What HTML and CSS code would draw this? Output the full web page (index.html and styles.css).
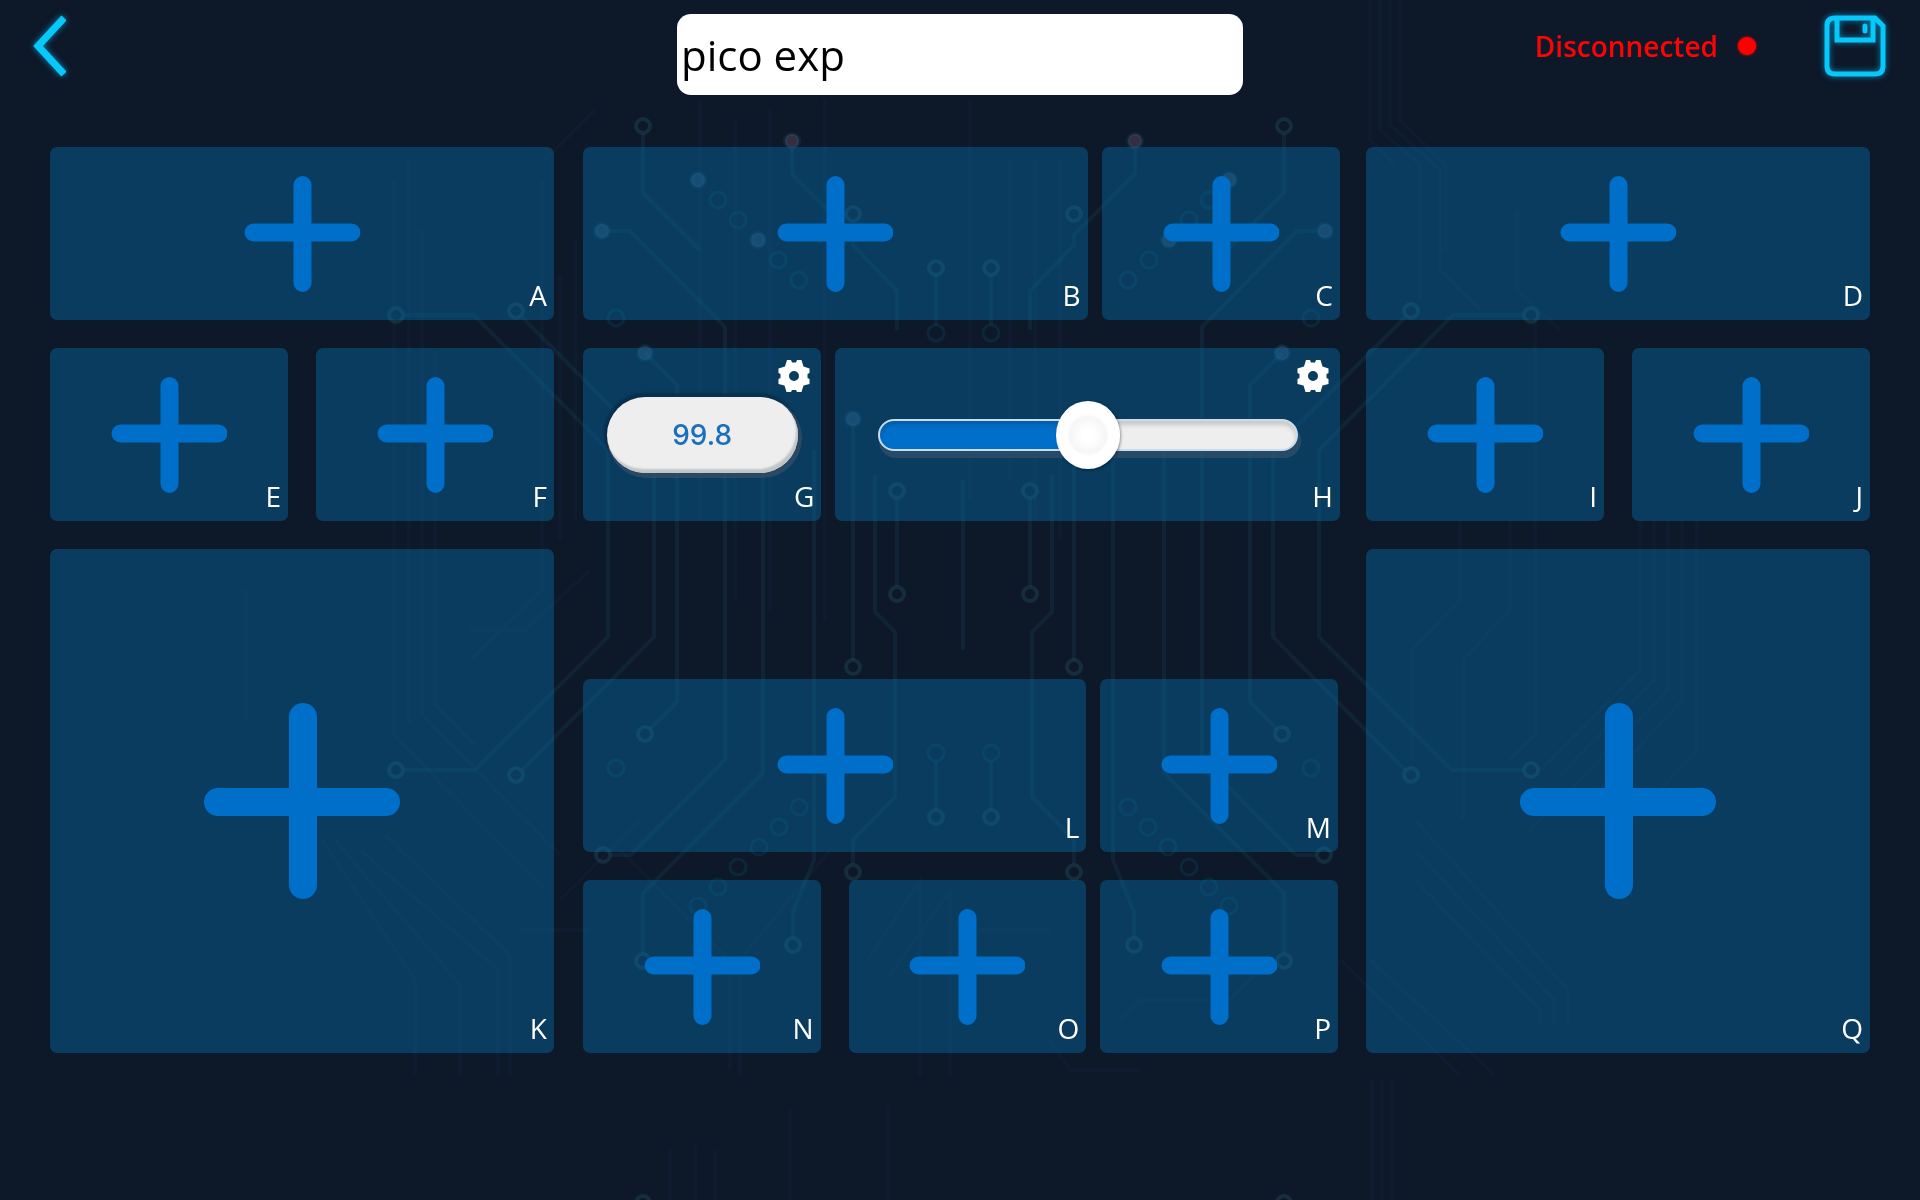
FILE: index.html
```html
<!DOCTYPE html>
<html lang="en">
<head>
<meta charset="utf-8">
<meta name="viewport" content="width=device-width, initial-scale=1">
<title>pico exp</title>
<link rel="stylesheet" href="styles.css">
</head>
<body>
<svg class="circuit" viewBox="0 0 1920 1200" preserveAspectRatio="xMidYMid slice" aria-hidden="true">
  <defs>
    <g id="half">
      <g class="trace">
        <path d="M643 134V193L700 250M610 231H630L725 327V345M792 149V174L853 235V245L897 291V330M936 276V325M404 315H474L608 450V637L475 770H404M522 317L654 450V637L522 770M645 353L677 385V702L650 729M725 345V760L631 855H611M763 450V773L643 893V953M814 450V860L793 912V937M853 427V660M875 475V612L895 632V797L853 840V864M897 499V586M936 761V809"/>
      </g>
      <g class="ring">
        <circle cx="643" cy="126" r="7"/><circle cx="853" cy="214" r="7"/><circle cx="936" cy="268" r="7"/><circle cx="396" cy="315" r="7"/><circle cx="516" cy="311" r="7"/><circle cx="897" cy="491" r="7"/><circle cx="897" cy="594" r="7"/><circle cx="853" cy="667" r="7"/><circle cx="645" cy="734" r="7"/><circle cx="603" cy="855" r="7"/><circle cx="396" cy="770" r="7"/><circle cx="516" cy="775" r="7"/><circle cx="936" cy="817" r="7"/><circle cx="853" cy="872" r="7"/><circle cx="793" cy="945" r="7"/><circle cx="643" cy="961" r="7"/><circle cx="643" cy="1203" r="7"/>
      </g>
      <g class="ring-thin">
        <circle cx="718" cy="200" r="8"/><circle cx="738" cy="220" r="8"/><circle cx="778" cy="260" r="8"/><circle cx="799" cy="280" r="8"/><circle cx="616" cy="318" r="8"/><circle cx="616" cy="768" r="8"/><circle cx="799" cy="807" r="8"/><circle cx="779" cy="827" r="8"/><circle cx="759" cy="847" r="8"/><circle cx="738" cy="867" r="8"/><circle cx="718" cy="887" r="8"/><circle cx="698" cy="906" r="8"/><circle cx="936" cy="333" r="8"/><circle cx="936" cy="753" r="8"/>
      </g>
      <g class="pad">
        <circle cx="602" cy="231" r="7"/><circle cx="698" cy="180" r="7"/><circle cx="758" cy="240" r="7"/><circle cx="645" cy="353" r="7"/><circle cx="853" cy="419" r="7"/><circle class="pad-warm" cx="792" cy="141" r="7"/>
      </g>
    </g>
  </defs>
  <g class="faint">
    <path d="M394 180V735L545 890M409 160V725M422 230V715L560 855M435 350V705L475 745M246 590V720M322 840L415 980V1075M335 840L460 985V1075M360 850L498 970V1075M385 835L510 955V1075M542 180V590L470 660M560 275V540M575 240V520M595 110L545 160M470 630H525L590 570M700 100V520M735 120V600M770 110V610M825 100V620M970 100V500M1010 160V480M1035 160V520M1060 160V540"/>
    <path d="M1370 0V140L1395 165M1380 0V130L1420 165V300M1390 0V125L1440 170V270L1480 310M1400 0V120L1446 165V250M1460 520V600L1412 650V760M1510 520V610L1463 660V820M1535 320V735L1510 760M1517 210V290L1560 330M1640 520V670L1540 770M1654 520V680L1560 775M1668 520V690L1530 830M1682 520V700L1600 790M1697 520V750L1660 790M1415 820L1568 990V1025M1415 850L1554 1000V1025M1415 880L1540 1010V1025M1340 960L1460 1075M1370 960L1495 1075M1372 1080V1200M1382 1080V1200M1392 1080V1200"/>
    <path d="M560 900L640 820M590 930H520M620 850L730 960V1070M830 850L740 960V1075M868 960L920 880V1075M890 975L950 890V1075M980 930H1050M1120 1020L1140 1000H1230L1260 970M1050 1040L1070 1070H1140M670 1150V1200M695 1145V1200M715 1150V1200M790 1110V1200M888 1105V1200"/>
  </g>
  <use href="#half"/>
  <use href="#half" transform="translate(1927 0) scale(-1 1)"/>
  <path class="trace" d="M963 480V650"/>
</svg>

<svg class="sprite" aria-hidden="true">
  <symbol id="plus" viewBox="0 0 116 116">
    <path d="M58.500 9V107M9.500 56.500H107.500"/>
  </symbol>
  <symbol id="plus-large" viewBox="0 0 198 198">
    <path d="M100 15V183M15 100H183"/>
  </symbol>
  <symbol id="gear" viewBox="0 0 32 32">
    <path fill-rule="evenodd" d="M9 0L13 0L14 2.500H18L19 0H23.500L25.500 6.500L31.500 8.500V13L29.500 14V18L31.500 19V24L25.500 25.500L23.500 32H19L18 30H14L13 32H8.500L6.500 25.500L.5 24V19L2.500 18V14L.5 13V8.500L7 6.500ZM16 11a5 5 0 1 0 0 10a5 5 0 0 0 0-10Z"/>
  </symbol>
</svg>

<header class="topbar">
  <button class="icon-button" type="button" aria-label="Back">
    <svg class="glow" width="34" height="64" viewBox="0 0 34 64"><path d="M32 4L6 32L32 60" stroke-width="7"/></svg>
  </button>
  <input class="project-name" type="text" value="pico exp" aria-label="Project name">
  <div class="actions">
    <p class="status">Disconnected<span class="status-dot"></span></p>
    <button class="icon-button" type="button" aria-label="Save">
      <svg class="glow" width="64" height="64" viewBox="0 0 64 64">
        <path stroke-width="5" d="M11 4H51L59 12V52Q59 60 51 60H11Q3 60 3 52V12Q3 4 11 4Z"/>
        <path stroke-width="5" d="M13 4V26H49V4"/>
        <path stroke-width="5" stroke-linecap="round" d="M41 12V17"/>
      </svg>
    </button>
  </div>
</header>

<main class="board">
  <section class="side">
    <button class="tile wide" type="button"><svg class="plus"><use href="#plus"/></svg><span class="slot">A</span></button>
    <button class="tile" type="button"><svg class="plus"><use href="#plus"/></svg><span class="slot">E</span></button>
    <button class="tile" type="button"><svg class="plus"><use href="#plus"/></svg><span class="slot">F</span></button>
    <button class="tile wide large" type="button"><svg class="plus"><use href="#plus-large"/></svg><span class="slot">K</span></button>
  </section>

  <section class="center">
    <div class="group">
      <div class="row wide-first">
        <button class="tile" type="button"><svg class="plus"><use href="#plus"/></svg><span class="slot">B</span></button>
        <button class="tile" type="button"><svg class="plus"><use href="#plus"/></svg><span class="slot">C</span></button>
      </div>
      <div class="row wide-last">
        <div class="tile">
          <output class="readout">99.8</output>
          <button class="settings" type="button" aria-label="Settings for G"><svg width="32" height="32"><use href="#gear"/></svg></button>
          <span class="slot">G</span>
        </div>
        <div class="tile">
          <input class="slider" type="range" min="0" max="100" value="50" aria-label="Slider H">
          <button class="settings" type="button" aria-label="Settings for H"><svg width="32" height="32"><use href="#gear"/></svg></button>
          <span class="slot">H</span>
        </div>
      </div>
    </div>
    <div class="group lower">
      <div class="row wide-first">
        <button class="tile" type="button"><svg class="plus"><use href="#plus"/></svg><span class="slot">L</span></button>
        <button class="tile" type="button"><svg class="plus"><use href="#plus"/></svg><span class="slot">M</span></button>
      </div>
      <div class="row wide-first">
        <div class="row pair">
          <button class="tile" type="button"><svg class="plus"><use href="#plus"/></svg><span class="slot">N</span></button>
          <button class="tile" type="button"><svg class="plus"><use href="#plus"/></svg><span class="slot">O</span></button>
        </div>
        <button class="tile" type="button"><svg class="plus"><use href="#plus"/></svg><span class="slot">P</span></button>
      </div>
    </div>
  </section>

  <section class="side">
    <button class="tile wide" type="button"><svg class="plus"><use href="#plus"/></svg><span class="slot">D</span></button>
    <button class="tile" type="button"><svg class="plus"><use href="#plus"/></svg><span class="slot">I</span></button>
    <button class="tile" type="button"><svg class="plus"><use href="#plus"/></svg><span class="slot">J</span></button>
    <button class="tile wide large" type="button"><svg class="plus"><use href="#plus-large"/></svg><span class="slot">Q</span></button>
  </section>
</main>
</body>
</html>
```
FILE: styles.css
```css
* { box-sizing: border-box; }

body {
  margin: 0;
  min-height: 100vh;
  background: #0d1829;
  color: #fff;
  font: 28px/32px "Open Sans", "Noto Sans", sans-serif;
}

button {
  border: 0;
  padding: 0;
  background: none;
  color: inherit;
  font: inherit;
  cursor: pointer;
}

/* Circuit board backdrop */
.circuit {
  position: fixed;
  inset: 0;
  z-index: -1;
  width: 100%;
  height: 100%;
  fill: none;
}
.trace { stroke: rgba(40, 120, 145, .12); stroke-width: 4; }
.ring { stroke: rgba(60, 130, 145, .2); stroke-width: 4; }
.ring-thin { stroke: rgba(20, 120, 150, .16); stroke-width: 3; }
.pad { fill: rgba(100, 115, 150, .3); stroke: rgba(30, 110, 140, .16); stroke-width: 4; }
.pad-warm { fill: rgba(130, 90, 110, .35); }
.faint { stroke: rgba(50, 90, 150, .05); stroke-width: 4; }
.sprite { position: absolute; width: 0; height: 0; }

/* Top bar */
.topbar {
  display: grid;
  grid-template-columns: 1fr minmax(0, 566px) 1fr;
  align-items: start;
  padding: 14px 32px 0;
}
.icon-button { height: 64px; justify-self: start; }
.icon-button svg { display: block; }
.glow {
  fill: none;
  stroke: #06c8fb;
  overflow: hidden;
  filter: drop-shadow(0 0 3px #0587b5);
}
.project-name {
  width: 100%;
  height: 81px;
  border: 0;
  border-radius: 14px;
  padding: 0 4px;
  background: #fff;
  color: #000;
  font: inherit;
  font-size: 42px;
}
.actions { display: flex; justify-content: flex-end; gap: 68px; }
.status {
  display: flex;
  align-items: center;
  gap: 20px;
  margin: 0;
  height: 64px;
  color: #fa0505;
  font-weight: 600;
}
.status-dot {
  width: 18px;
  height: 18px;
  border-radius: 50%;
  background: #f00;
  box-shadow: 0 0 3px #f00;
}

/* Widget board */
.board {
  display: grid;
  grid-template-columns: 504fr 760fr 504fr;
  gap: 26px;
  padding: 52px 50px;
}
.side {
  display: grid;
  grid-template-columns: 1fr 1fr;
  grid-auto-rows: minmax(173px, auto);
  gap: 28px;
}
.wide { grid-column: span 2; }
.large { aspect-ratio: 1; }
.center {
  display: flex;
  flex-direction: column;
  justify-content: space-between;
  padding-left: 3px;
}
.group { display: grid; gap: 28px; }
.lower { padding-right: 2px; }
.row { display: grid; gap: 14px; }
.wide-first { grid-template-columns: 504fr 238fr; }
.wide-last { grid-template-columns: 238fr 504fr; }
.pair { grid-template-columns: 1fr 1fr; gap: 28px; }

.tile {
  display: grid;
  place-items: center;
  min-height: 173px;
  border-radius: 7px;
  background: rgba(5, 114, 178, .4);
}
.tile > * { grid-area: 1 / 1; }
.plus {
  width: 116px;
  height: 116px;
  fill: none;
  stroke: #006fca;
  stroke-width: 18;
  stroke-linecap: round;
}
.large .plus { width: 198px; height: 198px; stroke-width: 28; }
.slot { place-self: end; padding: 0 7px 9px 0; }
.settings { place-self: start end; padding: 12px 11px 0 0; height: 44px; }
.settings svg { display: block; fill: #fff; }

.readout {
  display: grid;
  place-items: center;
  width: 191px;
  height: 76px;
  border-radius: 38px;
  background: #eee;
  box-shadow:
    inset -2px -4px 2px #c2c4c6,
    2px 3px 0 2px rgba(70, 85, 105, .55),
    -1px -2px 2px 2px rgba(8, 45, 75, .8);
  color: #1a6fbd;
  font-family: Inter, "Liberation Sans", sans-serif;
  font-weight: 500;
}

.slider {
  appearance: none;
  width: 420px;
  max-width: 84%;
  height: 68px;
  margin: 0;
  background: none;
}
.slider::-webkit-slider-runnable-track {
  height: 32px;
  border: 2px solid #c9dcea;
  border-radius: 16px;
  background: linear-gradient(to right, #006fca 50%, #eee 50%);
  box-shadow:
    inset 0 4px 4px rgba(0, 0, 0, .16),
    2px 6px 0 1px rgba(60, 85, 110, .6);
}
.slider::-webkit-slider-thumb {
  appearance: none;
  width: 64px;
  height: 68px;
  margin-top: -20px;
  border: 0;
  border-radius: 50%;
  background: radial-gradient(circle, #fff 6px, #f6f6f6 18px, #fff 21px);
  box-shadow: 1px 1px 3px rgba(0, 0, 0, .4);
}
```
